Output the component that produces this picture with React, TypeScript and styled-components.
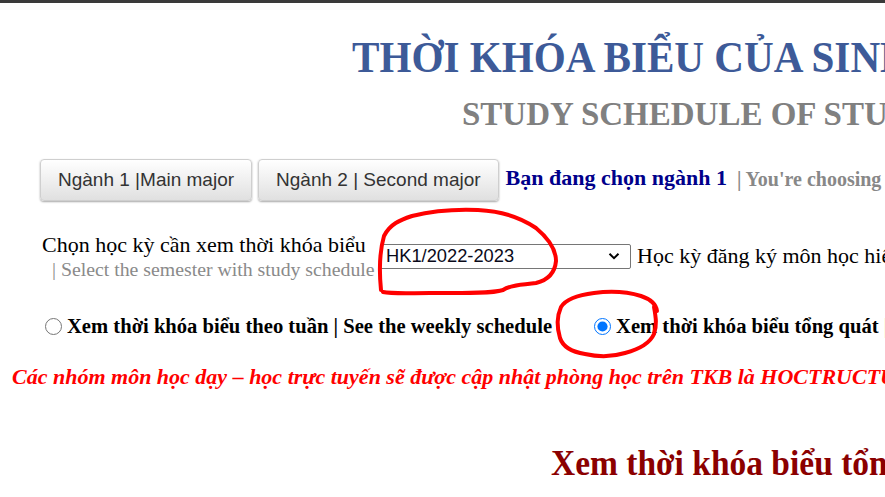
import React from "react";
import styled, { createGlobalStyle } from "styled-components";

const GlobalStyle = createGlobalStyle`
  html, body {
    margin: 0;
    padding: 0;
    background: #ffffff;
    overflow: hidden;
  }
  body {
    font-family: "Liberation Serif", "Times New Roman", serif;
    color: #000;
  }
`;

const Page = styled.div`
  position: relative;
  width: 1500px;
  min-height: 497px;
  white-space: nowrap;
`;

const TopBar = styled.div`
  height: 3px;
  background: #3a3a3a;
`;

const Header = styled.header`
  display: flex;
  flex-direction: column;
  padding-top: 33px;
`;

const MainTitle = styled.h1`
  margin: 0;
  padding-left: 352px;
  font-family: "Liberation Serif", "Times New Roman", serif;
  font-size: 44px;
  line-height: 44px;
  font-weight: bold;
  color: #3d5a98;
`;

const Condensed = styled.span<{ $k: number }>`
  display: inline-block;
  transform: scaleX(${(p) => p.$k});
  transform-origin: left center;
`;

const SubTitle = styled.h2`
  margin: 18px 0 0;
  padding-left: 462px;
  font-family: "Liberation Serif", "Times New Roman", serif;
  font-size: 33px;
  line-height: 33px;
  font-weight: bold;
  color: #808080;
`;

const MajorRow = styled.div`
  display: flex;
  align-items: center;
  gap: 6px;
  margin-top: 28px;
  padding-left: 40px;
`;

const MajorButton = styled.button`
  height: 42px;
  padding: 0 17px;
  font-family: "Liberation Sans", Arial, sans-serif;
  font-size: 19px;
  color: #333;
  background: linear-gradient(#ffffff, #e0e0e0);
  border: 1px solid #cfcfcf;
  border-radius: 4px;
  box-shadow: 0 1px 2px rgba(0, 0, 0, 0.35);
  cursor: pointer;
`;

const ChosenMajor = styled.span`
  margin-left: 1px;
  font-size: 22px;
  font-weight: bold;
  color: #00008b;
  align-self: flex-start;
  margin-top: 6px;
`;

const ChosenNote = styled.span`
  margin-left: 4px;
  font-size: 20px;
  font-weight: bold;
  color: #888888;
  align-self: flex-start;
  margin-top: 9px;
`;

const SemesterRow = styled.div`
  display: flex;
  align-items: center;
  margin-top: 31px;
  padding-left: 42px;
`;

const LabelCell = styled.div`
  display: flex;
  flex-direction: column;
  width: 338px;
`;

const LabelMain = styled.div`
  font-size: 22px;
  line-height: 25px;
`;

const LabelSub = styled.div`
  padding-left: 10px;
  font-size: 19.8px;
  line-height: 22px;
  margin-top: 1px;
  color: #8a8a8a;
`;

const SelectBox = styled.div`
  position: relative;
  display: flex;
  align-items: center;
  width: 251px;
  height: 25px;
  box-sizing: border-box;
  border: 1px solid #767676;
  border-radius: 2px;
  background: #fff;
  font-family: "Liberation Sans", Arial, sans-serif;
  font-size: 18.3px;
  color: #0a0a1a;
  padding-left: 5px;
`;

const SelectText = styled.span`
  flex: 1;
`;

const Chevron = styled.svg`
  width: 14px;
  height: 14px;
  margin-right: 9px;
`;

const CurrentNote = styled.span`
  margin-left: 6px;
  font-size: 22px;
`;

const RadioRow = styled.div`
  display: flex;
  align-items: center;
  margin-top: 35px;
  padding-left: 45px;
`;

const RadioOption = styled.label<{ $gap?: number }>`
  display: flex;
  align-items: center;
  margin-left: ${(p) => p.$gap ?? 0}px;
  font-size: 20.6px;
  font-weight: bold;
`;

const Radio = styled.input`
  width: 17px;
  height: 17px;
  margin: 0 5px 0 0;
  accent-color: #0075ff;
`;

const Bar = styled.span`
  color: #c8860a;
`;

const Notice = styled.p`
  margin: 26px 0 0;
  padding-left: 12px;
  font-size: 22px;
  font-weight: bold;
  font-style: italic;
  color: #ff0000;
`;

const OverviewTitle = styled.h2`
  margin: 55px 0 0;
  padding-left: 551px;
  font-family: "Liberation Serif", "Times New Roman", serif;
  font-size: 36px;
  line-height: 36px;
  font-weight: bold;
  color: #8b0000;
`;

const Annotations = styled.svg`
  position: absolute;
  left: 0;
  top: 0;
  width: 885px;
  height: 497px;
  pointer-events: none;
`;

export default function App() {
  return (
    <>
      <GlobalStyle />
      <Page>
        <TopBar />
        <Header>
          <MainTitle>
            <Condensed $k={0.935}>THỜI KHÓA BIỂU CỦA SINH VIÊN</Condensed>
          </MainTitle>
          <SubTitle>STUDY SCHEDULE OF STUDENTS</SubTitle>
        </Header>

        <MajorRow>
          <MajorButton>Ngành 1 |Main major</MajorButton>
          <MajorButton>Ngành 2 | Second major</MajorButton>
          <ChosenMajor>Bạn đang chọn ngành 1</ChosenMajor>
          <ChosenNote>| You're choosing &nbsp;main major</ChosenNote>
        </MajorRow>

        <SemesterRow>
          <LabelCell>
            <LabelMain>Chọn học kỳ cần xem thời khóa biểu</LabelMain>
            <LabelSub>| Select the semester with study schedule</LabelSub>
          </LabelCell>
          <SelectBox>
            <SelectText>HK1/2022-2023</SelectText>
            <Chevron viewBox="0 0 14 14">
              <path d="M2.5 4.8 L7 9.2 L11.5 4.8" fill="none" stroke="#000" strokeWidth="2" />
            </Chevron>
          </SelectBox>
          <CurrentNote>Học kỳ đăng ký môn học hiện tại | Current semester</CurrentNote>
        </SemesterRow>

        <RadioRow>
          <RadioOption>
            <Radio type="radio" name="view" />
            Xem thời khóa biểu theo tuần | See the weekly schedule
          </RadioOption>
          <RadioOption $gap={42}>
            <Radio type="radio" name="view" defaultChecked />
            Xem thời khóa biểu tổng quát <Bar>&nbsp;|</Bar>&nbsp;Overview schedule
          </RadioOption>
        </RadioRow>

        <Notice>
          Các nhóm môn học dạy – học trực tuyến sẽ được cập nhật phòng học trên TKB là HOCTRUCTUYEN
        </Notice>

        <OverviewTitle>
          <Condensed $k={0.93}>Xem thời khóa biểu tổng quát</Condensed>
        </OverviewTitle>

        <Annotations viewBox="0 0 885 497">
          <path
            d="M381 290 C379 270 380 250 384 236 C390 224 400 220 412 216 C432 211 455 209 478 210 C500 211 520 217 536 228 C548 238 556 250 556 261 C555 272 548 280 536 283 C524 285 512 284 503 290 C490 294 460 293 430 293 C410 293 392 294 383 292"
            fill="none"
            stroke="#ff0000"
            strokeWidth="4"
            strokeLinecap="round"
            strokeLinejoin="round"
          />
          <path
            d="M657 311 C656 304 650 299 641 296 C628 292 610 291 594 293 C578 295 566 299 561 307 C557 316 557 328 560 338 C563 347 572 352 585 354 C598 357 612 357 625 353 C640 349 650 343 654 334 C657 325 656 318 654 307"
            fill="none"
            stroke="#ff0000"
            strokeWidth="4"
            strokeLinecap="round"
            strokeLinejoin="round"
          />
        </Annotations>
      </Page>
    </>
  );
}
